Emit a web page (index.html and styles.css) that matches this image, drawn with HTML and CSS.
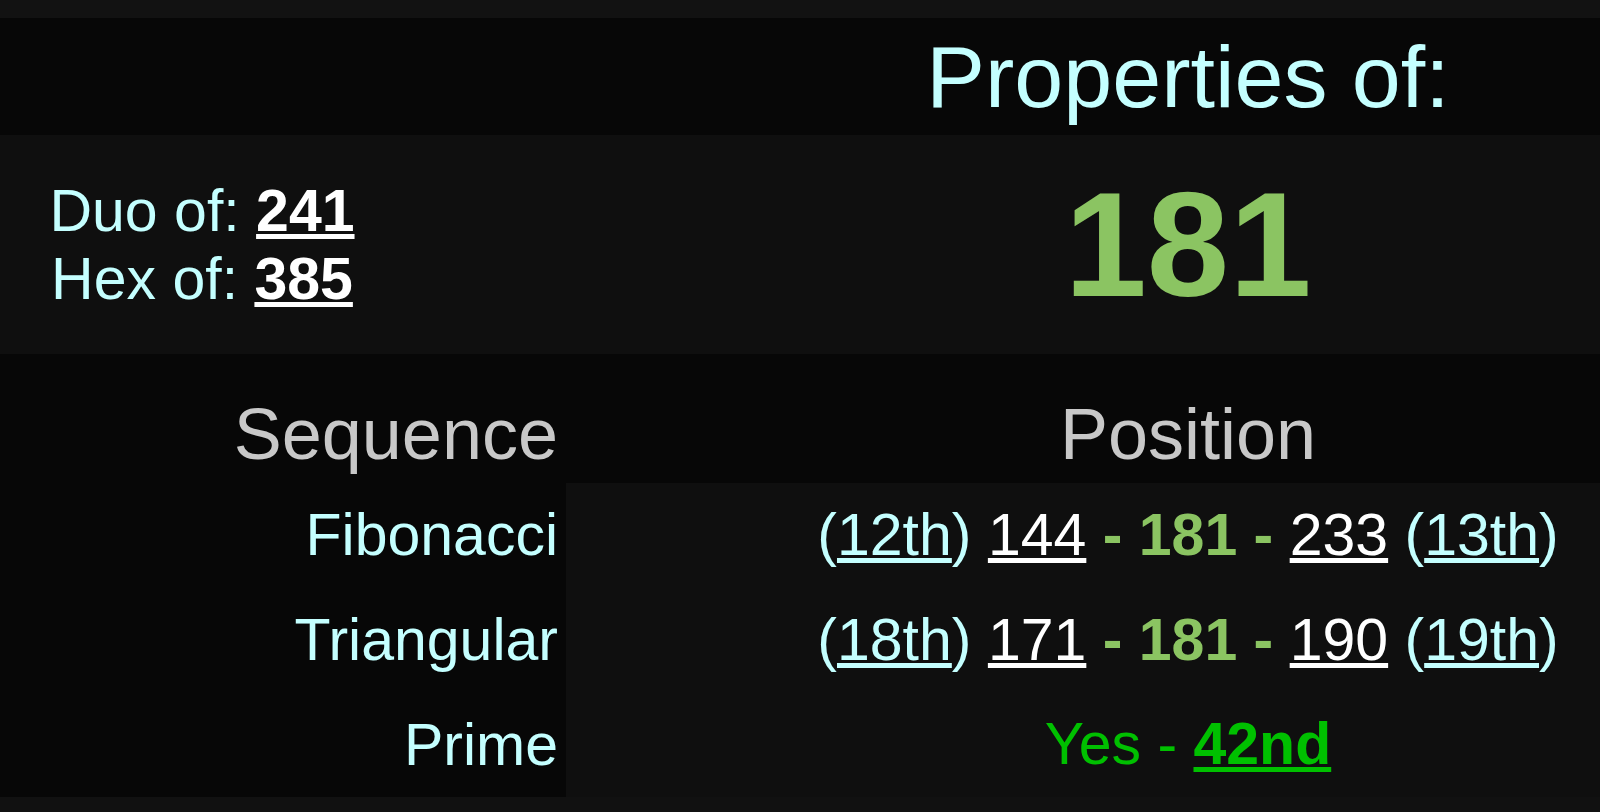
FILE: index.html
```html
<!DOCTYPE html>
<html lang="en">
<head>
  <meta charset="UTF-8">
  <meta name="viewport" content="width=device-width, initial-scale=1.0">
  <title>Properties of 181</title>
  <link rel="stylesheet" href="styles.css">
</head>
<body>

  <div class="top-strip"></div>

  <!-- Title -->
  <div class="band title-band">
    <div class="cell-left"></div>
    <div class="cell-right title">Properties of:</div>
  </div>

  <!-- Number + relations -->
  <div class="band hero-band">
    <div class="cell-left relations">
      <div>Duo of: <a class="num-link" href="#">241</a></div>
      <div>Hex of: <a class="num-link" href="#">385</a></div>
    </div>
    <div class="cell-right big-number">181</div>
  </div>

  <!-- Sequence table -->
  <div class="seq-table">
    <div class="seq-head label-cell">Sequence</div>
    <div class="seq-head pos-cell">Position</div>

    <div class="label-cell name">Fibonacci</div>
    <div class="pos-cell value">
      (<a class="ord" href="#">12th</a>) <a class="num" href="#">144</a>
      <b class="self">- 181 -</b>
      <a class="num" href="#">233</a> (<a class="ord" href="#">13th</a>)
    </div>

    <div class="label-cell name">Triangular</div>
    <div class="pos-cell value">
      (<a class="ord" href="#">18th</a>) <a class="num" href="#">171</a>
      <b class="self">- 181 -</b>
      <a class="num" href="#">190</a> (<a class="ord" href="#">19th</a>)
    </div>

    <div class="label-cell name">Prime</div>
    <div class="pos-cell value prime">Yes - <a class="prime-link" href="#">42nd</a></div>
  </div>

  <div class="bottom-strip"></div>

</body>
</html>
```

FILE: styles.css
```css
body {
  margin: 0;
  background: #111111;
  font-family: 'Liberation Sans', Arial, sans-serif;
  color: #c4ffff;
}

a {
  text-decoration: underline;
}

.top-strip {
  height: 18px;
  background: #121212;
}

.band {
  display: grid;
  grid-template-columns: 566px 1fr;
}

.cell-left,
.cell-right {
  display: flex;
  align-items: center;
  justify-content: center;
}

.cell-right {
  padding-left: 210px;
}

.title-band {
  height: 117px;
  background: #070707;
}

.title {
  font-size: 88px;
  color: #c4ffff;
}

.hero-band {
  height: 219px;
  background: #0f0f0f;
}

.relations {
  flex-direction: column;
  padding-right: 162px;
  font-size: 59px;
  line-height: 68px;
  text-align: center;
}

.num-link {
  color: #ffffff;
  font-weight: bold;
}

.big-number {
  font-size: 148px;
  font-weight: bold;
  color: #8bc462;
}

.seq-table {
  display: grid;
  grid-template-columns: 566px 1fr;
  grid-template-rows: 129px repeat(3, 104.67px);
  background: #070707;
}

.label-cell {
  display: flex;
  align-items: center;
  justify-content: flex-end;
  padding-right: 8px;
}

.pos-cell {
  display: flex;
  align-items: center;
  justify-content: center;
  padding-left: 210px;
  background: #0f0f0f;
  white-space: pre;
}

.seq-head {
  align-items: flex-end;
  padding-bottom: 8px;
  font-size: 72px;
  color: #c8c8c8;
  background: #070707;
  white-space: normal;
}

.name,
.value {
  font-size: 59px;
}

.value {
  display: block;
  text-align: center;
  line-height: 104.67px;
  white-space: normal;
}

.ord {
  color: #c4ffff;
}

.num {
  color: #ffffff;
}

.self {
  color: #8bc462;
}

.prime {
  color: #00c000;
}

.prime-link {
  color: #00c000;
  font-weight: bold;
}

.bottom-strip {
  height: 15px;
  background: #111111;
}
```
